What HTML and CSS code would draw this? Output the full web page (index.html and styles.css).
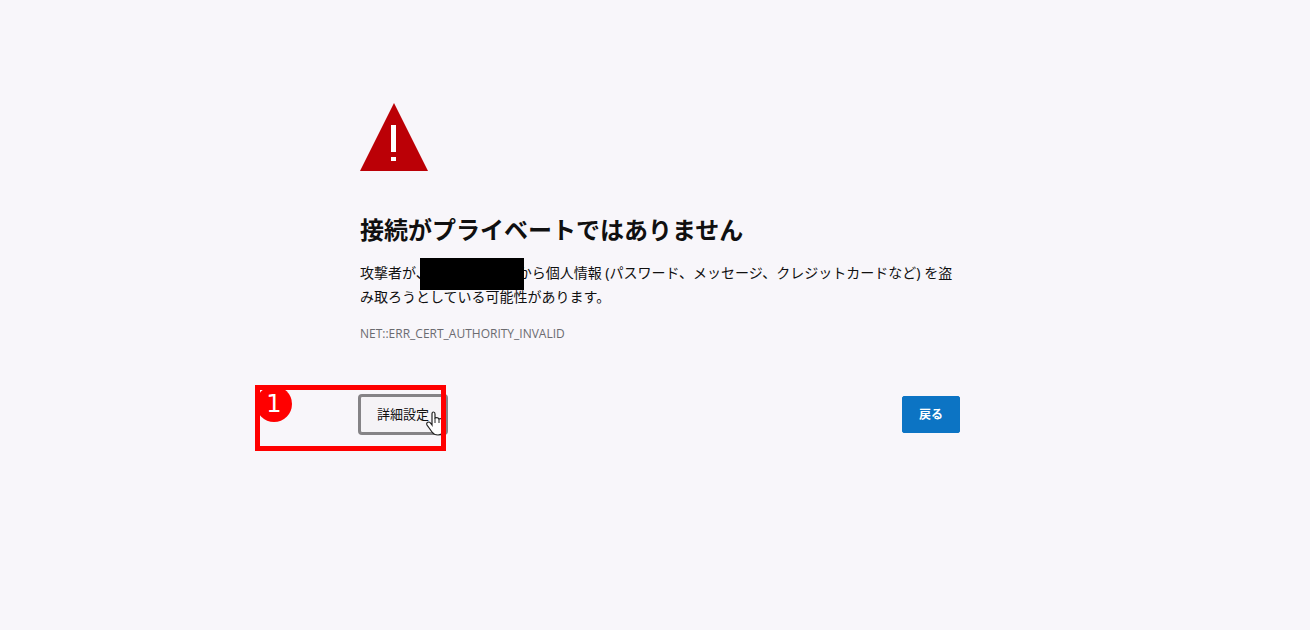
FILE: index.html
```html
<!DOCTYPE html>
<html lang="ja">
<head>
  <meta charset="UTF-8">
  <meta name="viewport" content="width=device-width, initial-scale=1.0">
  <title>プライバシー エラー</title>
  <link rel="stylesheet" href="styles.css">
</head>
<body>
  <main class="interstitial">
    <svg class="warning-icon" viewBox="0 0 68 68" aria-hidden="true">
      <path d="M34 0L68 68H0Z" fill="#bb0006"/>
      <path d="M31 22h5v27h-5zM31 54h5v4h-5z" fill="#fff"/>
    </svg>

    <h1>接続がプライベートではありません</h1>
    <p class="message">攻撃者が、<span class="redacted"></span>から個人情報 (パスワード、メッセージ、クレジットカードなど) を盗み取ろうとしている可能性があります。</p>
    <p class="error-code">NET::ERR_CERT_AUTHORITY_INVALID</p>

    <div class="actions">
      <button class="btn btn-details" type="button">詳細設定</button>
      <button class="btn btn-primary" type="button">戻る</button>

      <svg class="cursor" viewBox="0 0 20 25" aria-hidden="true">
        <path d="M6 14V3Q6 1 7.500 1T9 3V7Q12 6 13 8Q15 7 16 9Q19 8 19 11V17Q19 20 17 22Q15 24 12 24Q8 24 6 21L1 14Q0 11 3 11Q4 11 6 14Z" fill="#fff" stroke="#222" stroke-width="1.200"/>
        <path d="M9 7V12M13 8V12M16 9V12" fill="none" stroke="#222"/>
      </svg>
      <div class="callout"><span class="callout-number">1</span></div>
    </div>
  </main>
</body>
</html>
```

FILE: styles.css
```css
* {
  box-sizing: border-box;
}
body {
  margin: 0;
  min-height: 100vh;
  padding: 103px 0 0 10px;
  font-family: "Noto Sans", "Noto Sans CJK JP", sans-serif;
  background: #f8f6fa;
  color: #101010;
}
.interstitial {
  max-width: 600px;
  margin: 0 auto;
}
.warning-icon {
  display: block;
  width: 68px;
  height: 68px;
}
h1 {
  margin: 43px 0 15px;
  font-size: 24px;
  font-weight: bold;
  line-height: 32px;
}
.message {
  margin: 0;
  font-size: 14px;
  line-height: 24px;
}
.redacted {
  display: inline-block;
  position: relative;
  width: 88px;
  height: 14px;
}
/* the mask hides the edges of the neighbouring characters too */
.redacted::after {
  content: "";
  position: absolute;
  inset: -6px -6px -12px -10px;
  background: #000;
}
.error-code {
  margin: 17px 0 0;
  font-family: "Open Sans", sans-serif;
  font-size: 12px;
  line-height: 16px;
  color: #6b6b70;
}
.actions {
  display: flex;
  justify-content: space-between;
  position: relative;
  margin-top: 54px;
}
.btn {
  padding: 8px 16px;
  border: 1px solid #0c74c4;
  border-radius: 2px;
  font-family: inherit;
  font-size: 13px;
  line-height: 19px;
  cursor: pointer;
}
.btn-details {
  border-color: #858386;
  background: #f5f3f6;
  color: #101010;
  box-shadow: 0 0 0 2px #858386;
}
.btn-primary {
  background: #0c74c4;
  color: #fff;
  font-size: 12px;
  font-weight: bold;
}
.cursor {
  position: absolute;
  left: 66px;
  top: 15px;
  width: 20px;
  height: 25px;
}
.callout {
  position: absolute;
  left: -105px;
  top: -11px;
  width: 191px;
  height: 66px;
  border: 5px solid #f00;
  pointer-events: none;
}
.callout-number {
  position: absolute;
  left: -4px;
  top: -4px;
  width: 36px;
  height: 36px;
  border-radius: 50%;
  background: #f00;
  color: #fff;
  font-family: "DejaVu Sans", sans-serif;
  font-size: 24px;
  line-height: 36px;
  text-align: center;
}
```
